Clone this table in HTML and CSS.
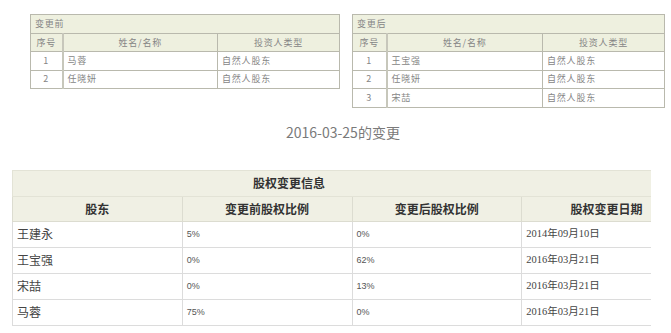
FILE: index.html
```html
<!DOCTYPE html>
<html lang="zh">
<head>
<meta charset="utf-8">
<link rel="stylesheet" href="styles.css">
</head>
<body>
<div class="page">
  <div class="compare">
    <table class="mini mini-left">
      <colgroup><col class="c1"><col class="c2"><col class="c3"></colgroup>
      <tr class="mtitle"><td colspan="3">变更前</td></tr>
      <tr class="mhead"><td>序号</td><td class="ctr">姓名/名称</td><td class="ctr">投资人类型</td></tr>
      <tr><td class="ctr">1</td><td>马蓉</td><td>自然人股东</td></tr>
      <tr><td class="ctr">2</td><td>任晓妍</td><td>自然人股东</td></tr>
    </table>
    <table class="mini mini-right">
      <colgroup><col class="c1"><col class="c2"><col class="c3"></colgroup>
      <tr class="mtitle"><td colspan="3">变更后</td></tr>
      <tr class="mhead"><td>序号</td><td class="ctr">姓名/名称</td><td class="ctr">投资人类型</td></tr>
      <tr><td class="ctr">1</td><td>王宝强</td><td>自然人股东</td></tr>
      <tr><td class="ctr">2</td><td>任晓妍</td><td>自然人股东</td></tr>
      <tr><td class="ctr">3</td><td>宋喆</td><td>自然人股东</td></tr>
    </table>
  </div>
  <div class="date-title">2016-03-25的变更</div>
  <div class="clip">
    <table class="big">
      <colgroup><col><col><col><col></colgroup>
      <tr class="btitle"><td colspan="4">股权变更信息</td></tr>
      <tr class="bhead"><td>股东</td><td>变更前股权比例</td><td>变更后股权比例</td><td>股权变更日期</td></tr>
      <tr><td class="name">王建永</td><td class="pct">5%</td><td class="pct">0%</td><td class="date">2014年09月10日</td></tr>
      <tr><td class="name">王宝强</td><td class="pct">0%</td><td class="pct">62%</td><td class="date">2016年03月21日</td></tr>
      <tr><td class="name">宋喆</td><td class="pct">0%</td><td class="pct">13%</td><td class="date">2016年03月21日</td></tr>
      <tr><td class="name">马蓉</td><td class="pct">75%</td><td class="pct">0%</td><td class="date">2016年03月21日</td></tr>
    </table>
  </div>
</div>
</body>
</html>
```
FILE: styles.css
```css
* { box-sizing: border-box; }
html, body { margin: 0; padding: 0; background: #fff; }
body {
  font-family: "Noto Sans CJK SC", "Noto Sans", sans-serif;
  color: #333;
  width: 671px;
  height: 333px;
  overflow: hidden;
}
.page { padding-top: 14px; }
.compare {
  display: flex;
  align-items: flex-start;
  gap: 12px;
  padding-left: 30px;
}
table { border-collapse: collapse; table-layout: fixed; }
.mini {
  border: 1px solid #b9b9ad;
  font-size: 9px;
  line-height: 12px;
  color: #858585;
  letter-spacing: 0.8px;
}
.mini-left { width: 310px; }
.mini-right { width: 313px; }
.mini-left .c1 { width: 32px; }
.mini-left .c2 { width: 155px; }
.mini-right .c1 { width: 34px; }
.mini-right .c2 { width: 156px; }
.mini td {
  border: 1px solid #b9b9ad;
  height: 18.5px;
  padding: 0 4px;
  line-height: 12px;
  white-space: nowrap;
  overflow: hidden;
}
.mini .mtitle td { background: #eef0df; height: 19px; }
.mini .mhead td { background: #eef0df; height: 18px; }
.mini tr td:first-child { text-align: center; }
.mini .mtitle td:first-child { text-align: left; }
.mini tr:not(.mtitle) td:nth-child(2) { border-left: 2px solid #c7c7bb; }
.ctr { text-align: center; }

.date-title {
  margin-top: 14px;
  padding-left: 286px;
  font-size: 14px;
  color: #7a7a7a;
  line-height: 20px;
}

.clip {
  margin-top: 28px;
  margin-left: 12px;
  width: 639px;
  overflow: hidden;
}
.big {
  width: 680px;
  font-size: 12px;
  line-height: 16px;
}
.big td {
  border: 1px solid #dcdcdc;
  height: 26px;
  padding: 0 4px;
  white-space: nowrap;
}
.big .btitle td {
  background: #f0f0e4;
  font-weight: bold;
  padding-left: 240px;
  border-color: #e3e3d6;
  height: 26px;
}
.big .bhead td {
  background: #f0f0e4;
  font-weight: bold;
  text-align: center;
  border-color: #dcdcd0;
  height: 25px;
}
.big .name { font-size: 12px; color: #444; }
.big .pct { font-size: 9px; color: #555; font-family: "Liberation Sans", sans-serif; }
.big .date { font-size: 10.5px; color: #444; font-family: "Liberation Serif", "Noto Sans CJK SC", serif; }
```
